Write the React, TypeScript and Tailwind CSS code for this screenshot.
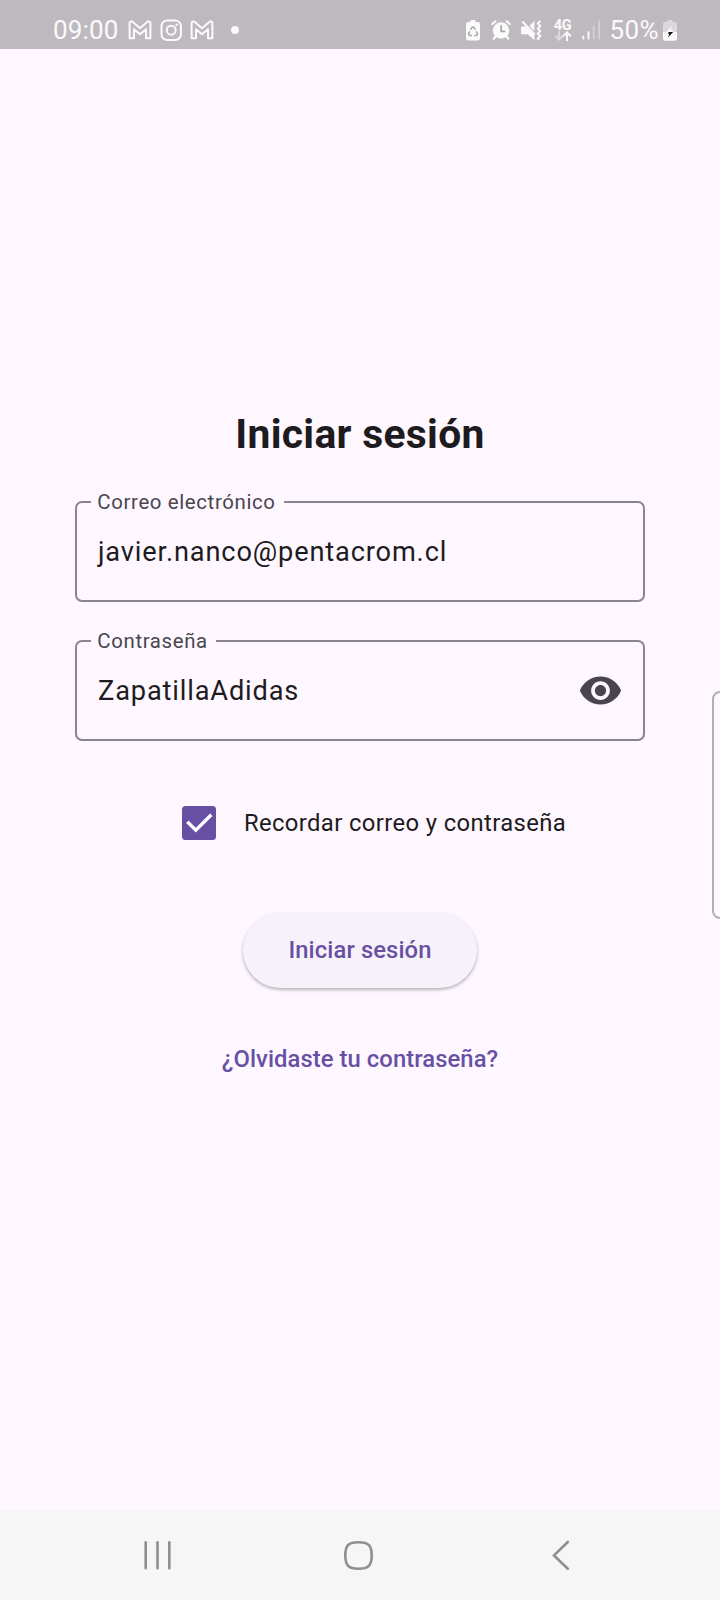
import type { ReactNode } from "react";

function GmailIcon({ className = "" }: { className?: string }) {
  return (
    <svg viewBox="0 0 24 20" className={`h-5 w-6 shrink-0 ${className}`} fill="none" stroke="#fafafa" strokeWidth="2" strokeLinejoin="round">
      <path d="M1.600 2.600 2.800 1.600h1.400L12 8.300l7.800-6.700h1.400L22.400 2.600V18.200H18V9.200L12 14.300 6 9.200V18.200H1.600Z" />
    </svg>
  );
}

function InstagramIcon() {
  return (
    <svg viewBox="0 0 22 22" className="-mt-px ml-[8px] size-[22px] shrink-0" fill="none" stroke="#fafafa" strokeWidth="2">
      <rect x="1.500" y="1.500" width="19.400" height="19.400" rx="5.500" />
      <circle cx="11.200" cy="11.200" r="4.500" />
      <circle cx="16.700" cy="5.700" r="1.300" fill="#fafafa" stroke="none" />
    </svg>
  );
}

function BatteryCareIcon() {
  return (
    <svg viewBox="0 0 14 21" className="h-[21px] w-[14px] shrink-0">
      <path fill="#fafafa" d="M4.500 0h5v2H12a2 2 0 0 1 2 2v14.500a2 2 0 0 1-2 2H2a2 2 0 0 1-2-2V4a2 2 0 0 1 2-2h2.500Z" />
      <path fill="none" stroke="#aaa4aa" strokeWidth="1.400" d="M4.600 9.800 6.100 7.200h1.800l1.500 2.600M10.200 11.300l1.400 2.500-1 1.700H8.200M5.900 15.500H3.400l-1-1.700 1.400-2.500" />
    </svg>
  );
}

function AlarmIcon() {
  return (
    <svg viewBox="0 0 20 20" className="ml-[11px] size-5 shrink-0">
      <circle cx="10" cy="10.500" r="8.200" fill="#fafafa" />
      <path stroke="#fafafa" strokeWidth="2.200" strokeLinecap="round" d="M1.300 4 4.300 1.300M18.700 4l-3-2.700M4.500 16.500 2.700 18.700M15.500 16.500l1.800 2.200" />
      <path fill="none" stroke="#aaa4aa" strokeWidth="1.700" d="M10.200 5.300v6h4" />
    </svg>
  );
}

function MuteVibrateIcon() {
  return (
    <svg viewBox="0 0 21 21" className="ml-[10px] size-[21px] shrink-0">
      <path fill="#fafafa" d="M1.200 6.500H5L13.400 15V20L6.500 14.200H1.200a1.200 1.200 0 0 1-1.200-1.200V7.700a1.200 1.200 0 0 1 1.200-1.200ZM13.400.8v10.400L8.400 6Z" />
      <path fill="none" stroke="#fafafa" strokeWidth="2" d="M1.300 1.500 13.800 14.500" />
      <path fill="none" stroke="#fafafa" strokeWidth="2" d="m19.200 1-2.300 2.400L19.200 6l-2.300 2.500 2.300 2.500-2.300 2.500 2.300 2.500-2.300 2.500 1 1.300" />
    </svg>
  );
}

function NetworkIcon() {
  return (
    <div className="ml-[11px] flex w-[20px] shrink-0 flex-col items-center">
      <span className="h-[11px] text-[14.500px] leading-[11px] font-bold tracking-[-0.400px]">4G</span>
      <svg viewBox="0 0 18 10" className="h-[10px] w-[18px]" fill="none" strokeWidth="2">
        <path stroke="#dcd8dc" d="M5 0v8.500M1.200 4.800 5 8.600l3.800-3.800" />
        <path stroke="#fafafa" d="M13 10V1.300M9.200 5.200 13 1.400l3.800 3.800" />
      </svg>
    </div>
  );
}

function SignalIcon() {
  return (
    <svg viewBox="0 0 19 20" className="ml-[9px] h-5 w-[19px] shrink-0" strokeWidth="1.900" strokeLinecap="round">
      <path stroke="#fafafa" d="M1.300 16.500V18.500M6.500 12v6.500" />
      <path stroke="#d5d1d5" d="M11.700 6.500v12M17.200 1.200v17.300" />
    </svg>
  );
}

function ChargingIcon() {
  return (
    <svg viewBox="0 0 14 21" className="ml-[4px] h-[21px] w-[14px] shrink-0">
      <path fill="#dcd8dc" d="M4.500 0h5v2H12a2 2 0 0 1 2 2v8H0V4a2 2 0 0 1 2-2h2.500Z" />
      <path fill="#fafafa" d="M0 11.900h14v6.800a2 2 0 0 1-2 2H2a2 2 0 0 1-2-2Z" />
      <path fill="#fafafa" d="M8.800 6 3.700 11.900H9.200l1.700-1.600H7.900Z" />
      <path fill="#111" d="M6 12h4.200L5 17.600l1.300-3.800H4.600Z" />
    </svg>
  );
}

function EyeIcon() {
  return (
    <svg viewBox="0 0 24 24" className="size-[45px] shrink-0" fill="#49454f">
      <path d="M12 4.500C7 4.500 2.730 7.610 1 12c1.730 4.390 6 7.500 11 7.500s9.270-3.110 11-7.500c-1.730-4.390-6-7.500-11-7.500zM12 17c-2.760 0-5-2.240-5-5s2.240-5 5-5 5 2.240 5 5-2.240 5-5 5zm0-8c-1.660 0-3 1.340-3 3s1.340 3 3 3 3-1.340 3-3-1.340-3-3-3z" />
    </svg>
  );
}

function Field({ label, value, children }: { label: string; value: string; children?: ReactNode }) {
  return (
    <fieldset className="h-[112px] w-[570px] rounded-[7px] border-2 border-[#89848e] pr-[20.500px] pl-[14px]">
      <legend className="h-6 pr-[8.500px] pl-[6.300px] text-[20.400px] leading-6 tracking-[0.640px] text-[#49454f]">{label}</legend>
      <div className="flex h-[75px] items-center justify-between pl-[7px]">
        <span className="text-[27.200px] leading-8 tracking-[0.850px]">{value}</span>
        {children}
      </div>
    </fieldset>
  );
}

export default function App() {
  return (
    <div className="relative flex h-[1600px] w-[720px] flex-col overflow-hidden bg-[#fef7ff] font-[Roboto,sans-serif] text-[#1d1b20]">
      <header className="flex h-[49px] items-start justify-between bg-[#beb9bf] pt-[20px] pr-[43px] pl-[53px] text-[#fafafa]">
        <div className="flex items-start">
          <span className="-mt-[5px] w-[65px] text-[26px] leading-[30px] tracking-[0.150px]">09:00</span>
          <GmailIcon className="ml-[10px]" />
          <InstagramIcon />
          <GmailIcon className="ml-[8px]" />
          <span className="mt-[6px] ml-[17px] size-2 rounded-full bg-[#fafafa]" />
        </div>
        <div className="flex items-start">
          <BatteryCareIcon />
          <AlarmIcon />
          <MuteVibrateIcon />
          <NetworkIcon />
          <SignalIcon />
          <span className="-mt-[5px] ml-[9px] text-[26px] leading-[30px] tracking-[0.400px]">50%</span>
          <ChargingIcon />
        </div>
      </header>

      <main className="flex flex-1 flex-col items-center pt-[361px]">
        <h1 className="text-[40.800px] leading-[48px] font-bold tracking-[0.300px]">Iniciar sesión</h1>
        <form className="mt-8 flex flex-col items-center">
          <div className="flex flex-col gap-[27px]">
            <Field label="Correo electrónico" value="javier.nanco@pentacrom.cl" />
            <Field label="Contraseña" value="ZapatillaAdidas">
              <EyeIcon />
            </Field>
          </div>
          <label className="mt-[65px] ml-[28px] flex h-[34px] items-center gap-[28px]">
            <span className="flex size-[34px] items-center justify-center rounded-[3.500px] bg-[#6750a4]">
              <svg viewBox="0 0 34 34" className="size-[34px]" fill="none" stroke="#fff" strokeWidth="3.400">
                <path d="m5.300 15.700 8.500 8.500L29.300 8.800" />
              </svg>
            </span>
            <span className="text-[23.800px] leading-[34px] tracking-[0.390px]">Recordar correo y contraseña</span>
          </label>
          <button
            type="button"
            className="mt-[73px] h-[75px] w-[234px] rounded-full bg-[#f7f2fa] text-[23.800px] font-medium tracking-[0.100px] text-[#6750a4] shadow-[0_1.700px_3.400px_rgba(0,0,0,0.300)]"
          >
            Iniciar sesión
          </button>
          <a className="mt-[54px] text-[23.800px] leading-[34px] font-medium tracking-[0.070px] text-[#6750a4]">¿Olvidaste tu contraseña?</a>
        </form>
      </main>

      <nav className="flex h-[90px] items-center bg-[#f6f6f6] pl-[143px] text-[#8f8f8f]">
        <svg viewBox="0 0 30 32" className="h-8 w-[30px]" stroke="currentColor" strokeWidth="2.600" strokeLinecap="round">
          <path d="M2.700 3.300v26M14.500 3.300v26M26.300 3.300v26" />
        </svg>
        <svg viewBox="0 0 32 32" className="ml-[169px] size-8" fill="none" stroke="currentColor" strokeWidth="2.600">
          <path d="M16.500 3.200C26.500 3.200 29.700 6.400 29.700 16.400S26.500 29.700 16.500 29.700 3.300 26.500 3.300 16.400 6.500 3.200 16.500 3.200Z" />
        </svg>
        <svg viewBox="0 0 20 32" className="ml-[177px] h-8 w-5" fill="none" stroke="currentColor" strokeWidth="2.600" strokeLinecap="round">
          <path d="M16.800 3 3 16.400l13.800 13.400" />
        </svg>
      </nav>

      <div className="absolute top-[691px] -right-[11px] h-[228px] w-[19px] rounded-[8px] border-2 border-[#b3afb4] bg-[#fcf8fd]" />
    </div>
  );
}
